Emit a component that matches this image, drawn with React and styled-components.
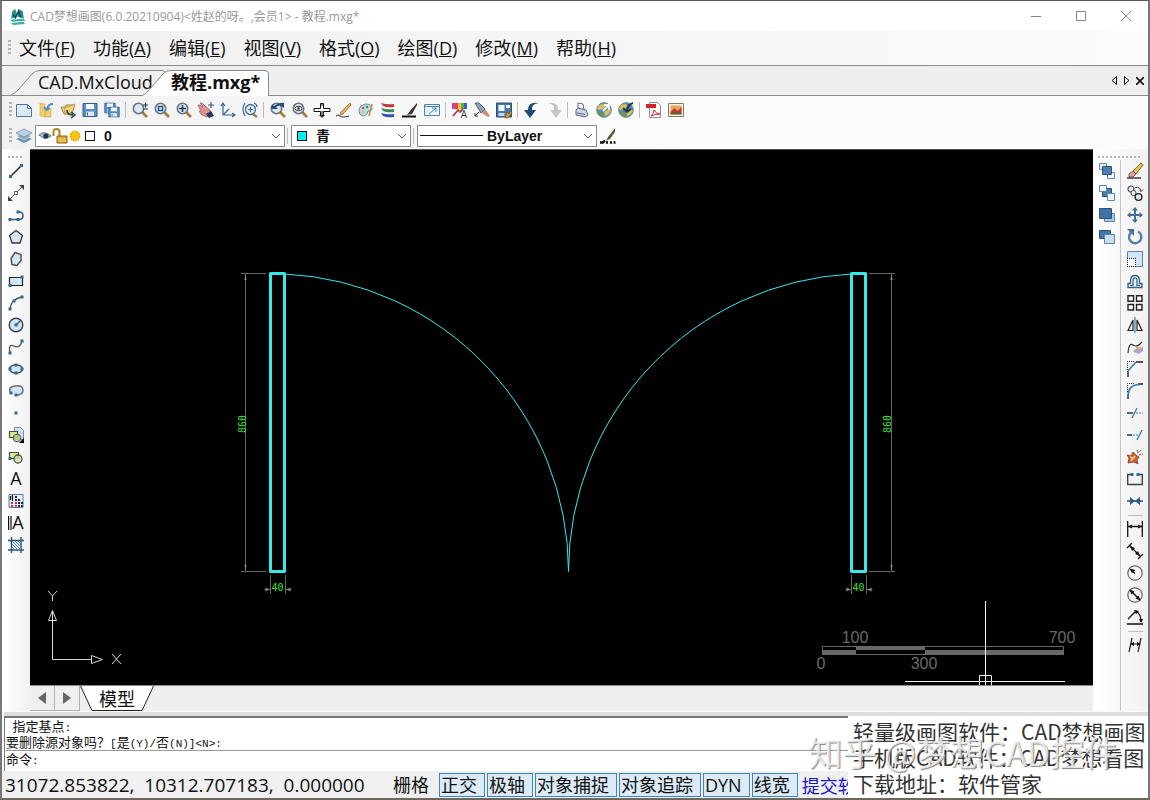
import React from 'react';
import styled, { createGlobalStyle } from 'styled-components';

const colores = {
  borde: '#8a8a8a',
  panel: '#efefef',
  marino: '#204877',
  claro: '#d3e6f5',
  cian: '#35e8ee',
  verde: '#3fe03f',
};

const ui = `'Open Sans', 'Noto Sans CJK SC', sans-serif`;

const GlobalStyle = createGlobalStyle`
  * { box-sizing: border-box; }
  body { margin: 0; font-family: ${ui}; color: #111; }
  button, input, select { font: inherit; color: inherit; }
  button { padding: 0; border: 0; background: none; }
  svg { display: block; flex: none; }
`;

const Window = styled.div`
  position: relative;
  min-height: 100vh;
  display: flex;
  flex-direction: column;
  border: 2px solid #77777a;
  border-top: 1px solid #55555a;
  border-bottom-color: #6d675d;
  background: #fafafa;
  overflow: hidden;
`;

const TitleBar = styled.header`
  height: 30px;
  display: flex;
  align-items: center;
  padding-left: 7px;
  background: #fff;
`;

const Title = styled.h1`
  flex: 1;
  margin: 0 0 0 4px;
  font-size: 12px;
  font-weight: 400;
  color: #999;
  white-space: nowrap;
`;

const WindowButton = styled.button`
  width: 45px;
  height: 30px;
  display: flex;
  align-items: center;
  justify-content: center;
`;

const MenuBar = styled.nav`
  height: 34px;
  display: flex;
  align-items: center;
  gap: 18px;
  padding-left: 6px;
  font-size: 18px;
  background: linear-gradient(90deg, #f0f0f0, #fbfbfb);
`;

const MenuItem = styled.button`
  white-space: nowrap;
  line-height: 24px;

  &:first-of-type { margin-left: -10px; }
`;

const Grip = styled.span`
  width: ${({ $flat }) => ($flat ? 'auto' : '3px')};
  height: ${({ $flat }) => ($flat ? '2px' : '16px')};
  flex: none;
  background: ${({ $flat }) =>
    `repeating-linear-gradient(${$flat ? '90deg' : '180deg'}, #b5b5b5 0 2px, transparent 2px 4px)`};
`;

const TabStrip = styled.div`
  height: 31px;
  display: flex;
  align-items: flex-end;
  padding-left: 8px;
  background: ${colores.panel};
  border-top: 1px solid ${colores.borde};
  border-bottom: 1px solid ${colores.borde};
`;

const Tab = styled.button`
  position: relative;
  width: ${({ $active }) => ($active ? '127px' : '156px')};
  height: 26px;
  margin: 0 0 -1px ${({ $active }) => ($active ? '-24px' : '0')};
  padding: 0 0 2px ${({ $active }) => ($active ? '29px' : '28px')};
  font-size: 18px;
  font-weight: ${({ $active }) => ($active ? 700 : 400)};
  line-height: 24px;
  text-align: left;
  white-space: nowrap;

  svg {
    position: absolute;
    inset: 0;
    width: 100%;
    height: 100%;
  }

  span { position: relative; }
`;

const TabControls = styled.div`
  display: flex;
  align-self: center;
  margin-left: auto;
  padding-right: 2px;
`;

const SmallButton = styled.button`
  width: 13px;
  height: 20px;
  display: flex;
  align-items: center;
  justify-content: center;
`;

const Toolbar = styled.div`
  height: ${({ $low }) => ($low ? '25px' : '28px')};
  display: flex;
  align-items: center;
  padding-left: 7px;
  padding-bottom: ${({ $low }) => ($low ? '1px' : '0')};
  background: linear-gradient(90deg, #f1f1f1, #fcfcfc 60%);

  ${Grip} { margin-right: 1px; }
`;

const ToolButton = styled.button`
  width: 22px;
  height: 22px;
  display: flex;
  flex: none;
  align-items: center;
  justify-content: center;

  &:hover { background: #dbe9f6; }
`;

const Separator = styled.span`
  flex: none;
  width: ${({ $flat }) => ($flat ? '15px' : '1px')};
  height: ${({ $flat }) => ($flat ? '1px' : '16px')};
  margin: ${({ $flat }) => ($flat ? '3px 4px 2px' : '0 3px 0 2px')};
  background: #bdbdbd;
`;

const Combo = styled.label`
  width: ${({ $width }) => $width};
  height: 22px;
  display: flex;
  align-items: center;
  padding: 0 3px 0 2px;
  border: 1px solid ${colores.borde};
  background: #fff;

  select {
    flex: 1;
    min-width: 0;
    height: 20px;
    padding: 0 0 0 ${({ $indent }) => $indent};
    border: 0;
    outline: 0;
    appearance: none;
    background: none;
    font: bold 14px 'Liberation Sans', 'Noto Sans CJK SC', sans-serif;
  }
`;

const Swatch = styled.span`
  width: 10px;
  height: 10px;
  flex: none;
  margin: 0 3px;
  border: 1px solid #111;
  background: ${({ $color }) => $color};
`;

const Workspace = styled.main`
  flex: 1;
  display: flex;
`;

const SideBar = styled.div`
  width: 28px;
  display: flex;
  flex-direction: column;
  padding: 7px 3px 0;
  background: linear-gradient(90deg, #fff, #f1f1f1);

  ${Grip} { margin: 0 4px 2px 3px; }
`;

const RightDock = styled.div`
  width: 55px;
  display: flex;
  flex-direction: column;
  padding-top: 7px;
  background: linear-gradient(90deg, #fff, #f1f1f1);

  > ${Grip} { margin: 0 7px 2px 5px; }
`;

const DockColumns = styled.div`
  flex: 1;
  display: flex;
`;

const DockColumn = styled.div`
  width: ${({ $last }) => ($last ? '28px' : '27px')};
  padding: 0 2px 0 3px;
  display: flex;
  flex-direction: column;
  border-left: ${({ $last }) => ($last ? '1px solid #c4c4c4' : '0')};
`;

const CenterPane = styled.div`
  flex: 1;
  min-width: 0;
  display: flex;
  flex-direction: column;
`;

const Canvas = styled.div`
  flex: 1;
  display: flex;
  min-height: 0;
  border-top: 1px solid #555;
  background: #000;

  > svg {
    flex: 1;
    width: 100%;
    min-width: 0;
  }
`;

const SheetBar = styled.div`
  height: 26px;
  display: flex;
  border-top: 1px solid ${colores.borde};
  background: ${colores.panel};
`;

const SheetArrow = styled.button`
  width: 25px;
  height: 25px;
  display: flex;
  align-items: center;
  justify-content: center;
  border: 1px solid #b0b0b0;
  border-width: 0 1px 1px 0;
`;

const SheetTab = styled.button`
  position: relative;
  width: 74px;
  height: 25px;
  font-size: 18px;
  line-height: 24px;

  svg {
    position: absolute;
    inset: 0;
  }

  span { position: relative; }
`;

const CommandPane = styled.section`
  margin: 5px 0 0 2px;
  padding-left: 1px;
  border: 1px solid #777;
  border-width: 2px 0 0 1px;
  background: #fff;
  font: 13px/16px 'Noto Sans CJK SC', sans-serif;
  box-shadow: 0 -4px 0 #dcdcdc;
`;

const CommandLog = styled.pre`
  height: 33px;
  margin: 0;
  font: inherit;
  border-bottom: 1px solid #999;
`;

const Latin = styled.span`
  font-family: 'Liberation Mono', monospace;
  font-size: 11px;
  line-height: 0;
`;

const CommandRow = styled.label`
  display: flex;
  height: 20px;

  input {
    flex: 1;
    padding: 0;
    border: 0;
    outline: 0;
    background: none;
  }
`;

const StatusBar = styled.footer`
  height: 27px;
  display: flex;
  align-items: center;
  gap: 2px;
  padding: 1px 0 0 3px;
  background: #f0f0f0;
  font-size: 18px;
  white-space: nowrap;
`;

const Coordinates = styled.output`
  width: 384px;
  font-size: 19px;
  white-space: pre;
`;

const Toggle = styled.button`
  height: 24px;
  padding: 0 7px 0 1px;
  border: 1px solid ${({ $on }) => ($on ? '#3a85bf' : 'transparent')};
  background: ${({ $on }) => ($on ? '#dcebf6' : 'none')};
  line-height: 20px;
`;

const SubmitLink = styled.a`
  padding-left: 2px;
  color: #1414c8;
  text-decoration: none;
`;

const Promo = styled.aside`
  position: absolute;
  right: -2px;
  bottom: -2px;
  width: 302px;
  height: 84px;
  padding: 2px 0 0 5px;
  background: #fff;
  color: #333;
  font: 21px/26px 'Noto Sans CJK SC', sans-serif;
  white-space: nowrap;

  p { margin: 0; }
`;

const Watermark = styled.div`
  position: absolute;
  right: 30px;
  bottom: 22px;
  color: rgba(255, 255, 255, 0.75);
  font: 34px/48px 'Noto Sans CJK SC', sans-serif;
  text-shadow: 1px 1px 1px #888;
  white-space: nowrap;
  pointer-events: none;
`;

const node = (x, y) => <rect x={x - 1.5} y={y - 1.5} width="3" height="3" fill="#2b6a9c" />;

const lens = (inner) => (
  <>
    <path d="M10 10l5 5" stroke="#b0763c" strokeWidth="2.6" />
    <circle cx="6.5" cy="6.5" r="5.2" fill="#dbe8f2" stroke="#6a7580" strokeWidth="1.6" />
    {inner}
  </>
);

const floppy = (
  <>
    <path d="M1 1.5h14v13H1z" fill="#5b8fc4" stroke="#315f90" />
    <path d="M4 2h8v5H4z" fill="#f3f8fc" />
    <path d="M4 9.5h8V14H4z" fill="#dbe8f2" />
    <path d="M5.5 10.5v3" stroke="#315f90" />
  </>
);

const globe = (
  <>
    <circle cx="8" cy="8" r="7.3" fill="#4c8fb4" stroke="#6b8a80" />
    <path d="M3 3l4-1 3 2-3 3-4 1-2-1zM8 10l5-3 2 2-3 4-3 1z" fill="#e0bd5c" />
    <path d="M2 10q3 4 6 4" stroke="#7c8f42" strokeWidth="2" fill="none" />
  </>
);

// Drawings on a 16 x 16 grid
const icons = {
  logo: (
    <>
      <path d="M2 10L3 3l3-2 2 7zM8 8l1-7 4 2 1 7z" fill="#258f94" />
      <path d="M4 6l2 3 3-6 2 6" stroke="#124d57" strokeWidth="1.5" fill="none" />
      <path d="M1 11l12-1 3 2-13 1zM2 14l12-1 1 2-11 1z" fill="#3cb0a6" />
    </>
  ),
  nuevo: <path d="M.5 2.5h11l4 4v8H.5zM11.5 2.5v4h4" fill="#d7ebf8" stroke="#50779c" />,
  abrir: (
    <>
      <path d="M2 1l5 1v13l-5-1zM7 7h6v8H7z" fill="#f0cf6a" stroke="#d1a84a" strokeWidth=".6" />
      <path d="M15 2q-5 0-6 5M6 5l2.5 3L12 6" fill="none" stroke="#4f8ec4" strokeWidth="1.8" />
    </>
  ),
  carpeta: (
    <>
      <path d="M1 5h4l1-2h8l-2 9H4z" fill="#f2dc95" stroke="#a88435" />
      <path d="M4 6l11-4-3 10H5z" fill="#ecd080" stroke="#a88435" strokeWidth=".7" />
      <path d="M7 8q0 5 6 5M11 10l4 3-4 3" fill="none" stroke="#283b4c" strokeWidth="1.5" />
    </>
  ),
  guardar: floppy,
  guardarTodo: (
    <>
      <g transform="scale(.75)">{floppy}</g>
      <g transform="translate(4 4) scale(.75)">{floppy}</g>
    </>
  ),
  zoomMas: (
    <>
      {lens()}
      <path d="M11 3h5M13.5 .5v5M11 7h5" stroke="#1c3b5e" strokeWidth="1.2" />
    </>
  ),
  zoomVentana: lens(<path d="M4.5 4.5h4v4h-4z" fill="none" stroke="#1d4f8c" strokeWidth="1.4" />),
  zoomTodo: lens(<path d="M3 6.5h7M6.5 3v7" stroke="#213b54" strokeWidth="1.6" />),
  mano: (
    <>
      <path d="M0 3l2 0 3 2-3-4 2 0 4 4 3 2 3 4-5 4-5-2-3-4 2 0z" fill="#d9938e" stroke="#a8605c" strokeWidth=".8" />
      <path d="M8 12l5-3 3 5-5 2z" fill="#223b65" />
      <path d="M10 3h6M13 0v6" stroke="#375f91" strokeWidth="1.2" />
    </>
  ),
  ejes: <path d="M3 1v12h12M3 13l6-6M1 4l2-3 2 3M12 11l3 2-3 2" fill="none" stroke="#386791" strokeWidth="1.2" />,
  zoomDinamico: (
    <>
      <path d="M11 12l4 3" stroke="#b0763c" strokeWidth="2.4" />
      <circle cx="8.5" cy="7.5" r="5" fill="#e6f2fb" stroke="#3f6d99" strokeWidth="1.3" />
      <path d="M6 7.5h5M8.5 5v5M3 1Q-1 7 3 14M12 1q3 1 3 4" fill="none" stroke="#3f6d99" strokeWidth="1.2" />
    </>
  ),
  zoomPrevio: lens(<path d="M1 7l1-5 2 2q5-4 10-3l0 5q-4-4-8-1l2 2z" fill="#284b7a" />),
  zoomOjo: lens(
    <>
      <ellipse cx="6.5" cy="6.5" rx="3.5" ry="2.2" fill="#fff" stroke="#333" />
      <circle cx="6.5" cy="6.5" r="1.2" fill="#222" />
    </>,
  ),
  cursor: (
    <>
      <path d="M0 6.5h6.5v-5h3v5H16v3H9.5v4h-3v-4H0z" fill="#fff" stroke="#111" />
      <path d="M8 1v3M8 9v6M5.5 13L8 15.500 10.500 13" fill="none" stroke="#111" />
    </>
  ),
  lapiz: (
    <>
      <path d="M14 1L5 10l-1 3 3-1 8-9z" fill="#e8ad55" stroke="#8b5a2b" strokeWidth=".7" />
      <path d="M0 14q2-2 4 0t9 0" fill="none" stroke="#3a2c28" />
    </>
  ),
  paleta: (
    <>
      <path d="M1 9q0-6 7-7 6 0 6 5-1 3-4 2-1 5-5 5-4-1-4-5z" fill="#b9dbe8" stroke="#6b8da1" />
      <circle cx="5" cy="6" r="1.3" fill="#d9493f" />
      <circle cx="9" cy="5" r="1.3" fill="#3f9d4b" />
      <circle cx="5" cy="10" r="1.3" fill="#e7b93d" />
      <path d="M14 2l-3 12" stroke="#c48c48" strokeWidth="1.6" />
    </>
  ),
  capasColor: (
    <>
      <path d="M1 1q6 2 13 1v3q-7 1-11-1z" fill="#c3343c" />
      <path d="M1 6q6 2 13 1v3q-7 1-11-1z" fill="#3c8c56" />
      <path d="M1 11q6 2 13 1v3q-7 1-11-1z" fill="#3153b4" />
    </>
  ),
  brocha: (
    <>
      <path d="M15 1L8 9l-3 4 5-1 5-9z" fill="#3b2f26" />
      <path d="M0 14.5h14" stroke="#111" strokeWidth="2" fill="none" />
    </>
  ),
  escalaVista: <path d="M.5 2.5h15v11H.5zM.5 4.5h15M5 12l7-6M8 6h4v4" fill="#eaf5fb" stroke="#4d86ac" />,
  colores: (
    <>
      <path d="M0 1h3v6H0z" fill="#d33bb4" />
      <path d="M3 1h3v6H3z" fill="#e8443c" />
      <path d="M6 1h3v6H6z" fill="#f0c53c" />
      <path d="M9 1h3v6H9z" fill="#4db05a" />
      <path d="M12 1h3v6h-3z" fill="#3c62d0" />
      <path d="M1 14l5-6 2 2 3-3" stroke="#a8483f" strokeWidth="1.8" fill="none" />
      <text x="12" y="16" textAnchor="middle" fontFamily="Open Sans, sans-serif" fontSize="10" fill="#333b58">A</text>
    </>
  ),
  borrador: (
    <>
      <path d="M1 1l4 0 6 6-4 4z" fill="#8aa3ba" stroke="#4d6277" />
      <path d="M8 11l3-4 5 7-2 1z" fill="#cf8a68" />
      <path d="M1 14l4-4M1 11v3h3" stroke="#333" fill="none" />
    </>
  ),
  guardarComo: (
    <>
      <path d="M.5 1h15v14H.5z" fill="#4a78a8" stroke="#2a4c70" />
      <path d="M2.5 3h6v6h-6zM10 3h4v3h-4z" fill="#f3f8fc" />
      <path d="M2.5 11h6v3h-6z" fill="#c7d7e4" />
      <path d="M9 16l2-6 2 2 2-3 1 2-4 5z" fill="#d49a3c" stroke="#6b481c" strokeWidth=".6" />
    </>
  ),
  deshacer: <path d="M15 1Q4-1 4 8H0l6 8 6-8H8Q7 2 15 1z" fill={colores.marino} />,
  rehacer: <path d="M1 1q11-2 11 7h4l-6 8-6-8h4q1-6-7-7z" fill="#c3c6c9" />,
  imprimir: (
    <>
      <path d="M4 1l5 1 1 6-6-1z" fill="#fff" stroke="#5b6787" />
      <path d="M2 8l2-2 8 2 2 5-3 2-9-2z" fill="#cdd5e6" stroke="#5b6787" />
      <path d="M3 11l8 1.5" stroke="#5b6787" />
    </>
  ),
  webSubir: (
    <>
      {globe}
      <path d="M7 9l5-5M8 3h5v5" stroke="#f4f6f8" strokeWidth="1.8" fill="none" />
    </>
  ),
  webBajar: (
    <>
      {globe}
      <path d="M15 1Q9 3 9 9M5 6l4 4 4-3" stroke="#263749" strokeWidth="2" fill="none" />
    </>
  ),
  pdf: (
    <>
      <path d="M3.5 .5h8l3 3v12h-11z" fill="#fff" stroke="#8c8c8c" />
      <path d="M0 2h10v4H0z" fill="#d3232b" />
      <path d="M5 14q3-3 3-6 2 4 6 4-5 0-9 2z" fill="none" stroke="#d3232b" />
    </>
  ),
  imagen: (
    <>
      <path d="M.5 1.5h15v13H.5z" fill="#f7f2e6" stroke="#8c7a60" />
      <path d="M2.5 3.5h11v9h-11z" fill="#e8a85a" />
      <path d="M2.5 10l4-4 3 3 4-4v7h-11z" fill="#bd3a2a" />
      <path d="M2.5 12l5-2 6 1v1.5h-11z" fill="#476b3c" />
    </>
  ),
  capas: (
    <>
      <path d="M0 11l8-3 8 3-8 4z" fill="#6b8bab" />
      <path d="M0 8l8-3 8 3-8 4z" fill="#8faac4" stroke="#fff" strokeWidth=".5" />
      <path d="M0 5l8-4 8 4-8 4z" fill="#bdd2e4" stroke="#55779a" strokeWidth=".6" />
    </>
  ),
  ojo: (
    <>
      <path d="M1 7q6-6 14 1-8 5-12 0z" fill="#aec2d6" stroke="#4a5d74" />
      <circle cx="9" cy="8" r="3" fill="#26384e" />
    </>
  ),
  candado: (
    <>
      <path d="M1.5 8V4q0-3 3-3t3 3v4" fill="none" stroke="#b28420" strokeWidth="2" />
      <path d="M5 8h10v7H5z" fill="#d9a72c" stroke="#8d6512" />
      <path d="M6 11h8M6 13h8" stroke="#f4d878" />
    </>
  ),
  sol: <circle cx="8" cy="8" r="5.5" fill="#f9c307" stroke="#e8a60c" strokeDasharray="2 1" strokeWidth="1.5" />,
  pluma: (
    <>
      <path d="M15 0L8 9l-2 4 4-2 5-7z" fill="#54613a" />
      <path d="M0 14.5h3l2-2M6 14.5h2M10 14.5h2M13.5 14.5h2" stroke="#111" strokeWidth="2.4" fill="none" />
    </>
  ),
  linea: <><path d="M2 14L14 2" stroke="#222" strokeWidth="1.4" />{node(2.5, 13.5)}{node(13.5, 2.5)}</>,
  lineaInf: (
    <>
      <path d="M1 15L15 1" stroke="#555" />
      <path d="M11 0h5v5zM0 11v5h5z" fill="#444" />
      <path d="M6.5 6.5h3v3h-3z" fill="#fff" stroke="#555" />
    </>
  ),
  polilinea: <><path d="M2 12.5h9q4 0 4-4t-5-3.5" fill="none" stroke="#3c5c78" strokeWidth="1.5" />{node(2, 12.5)}{node(10, 12.5)}{node(10, 5)}</>,
  poligono: <path d="M8 1.5l6.5 5-2.5 7.5H4L1.5 6.5z" fill={colores.claro} stroke="#333b43" strokeWidth="1.3" />,
  poligonoIrr: <path d="M7 1.5l6 2 0 6-4 5-5-1-1-6z" fill={colores.claro} stroke="#4a545d" strokeWidth="1.5" />,
  rectangulo: <><path d="M1.5 4.5h13v8h-13z" fill={colores.claro} stroke="#222" strokeWidth="1.2" />{node(2, 12.5)}{node(14, 4)}</>,
  arco: <><path d="M2 14Q3 4 14 2" fill="none" stroke="#4a545d" strokeWidth="1.3" />{node(2, 14)}{node(6, 6)}{node(14, 2)}</>,
  circulo: <><circle cx="8" cy="8" r="6.8" fill={colores.claro} stroke="#39434d" strokeWidth="1.4" /><path d="M8 8l4-4" stroke="#2b6a9c" strokeWidth="1.5" />{node(8, 8)}</>,
  spline: <><path d="M2 14Q0 4 6 7t8-5" fill="none" stroke="#4a545d" strokeWidth="1.3" />{node(2, 14)}{node(14, 2)}</>,
  elipse: <><ellipse cx="8" cy="8" rx="6.5" ry="4.2" fill={colores.claro} stroke="#39434d" strokeWidth="1.3" />{node(2, 8)}{node(14, 8)}{node(8, 4)}{node(8, 12)}</>,
  arcoElipse: <><path d="M3 10Q-1 4 7 3t8 4-7 5" fill={colores.claro} stroke="#66717c" strokeWidth="1.5" />{node(3, 10)}{node(8, 12)}</>,
  punto: node(8, 8),
  insertar: (
    <>
      <path d="M6.5 .5h6l3 3v9h-9z" fill={colores.claro} stroke="#6e8fac" />
      <path d="M1.5 4.5h8v6h-8z" fill="#d9e89a" stroke="#47563b" strokeWidth="1.2" />
      <circle cx="9" cy="11" r="3.8" fill="#bcd68f" fillOpacity=".8" stroke="#47563b" />
      <path d="M16 11v5h-5z" fill="#000" />
    </>
  ),
  bloque: (
    <>
      <path d="M1.5 3.5h9v6h-9z" fill="#d9e89a" stroke="#47563b" strokeWidth="1.2" />
      <circle cx="10" cy="10" r="4" fill="#cfe0ae" fillOpacity=".8" stroke="#47563b" strokeWidth="1.3" />
      {node(2, 9.5)}
    </>
  ),
  texto: <text x="8" y="14" textAnchor="middle" fontFamily="Open Sans, sans-serif" fontSize="18" fill="#111">A</text>,
  trama: (
    <>
      <path d="M1 1.5h14v13H1z" fill="#e7eff8" stroke="#5c7ca4" />
      <path d="M4.5 2v6M2.5 3v4" stroke="#111" strokeWidth="1.2" />
      <path d="M4 9v5M8 9v5" stroke="#c8343a" strokeWidth="2" strokeDasharray="2 1" />
      <path d="M8 3v5M11 6v8M14 9v5" stroke="#222b3c" strokeWidth="2" strokeDasharray="2 1" />
    </>
  ),
  textoMulti: (
    <>
      <path d="M.6 1v14M3 1v14" stroke="#111" strokeWidth="1.2" />
      <text x="10" y="14" textAnchor="middle" fontFamily="Open Sans, sans-serif" fontSize="18" fill="#111">A</text>
    </>
  ),
  sombreado: (
    <>
      <path d="M3.5 0v16M13 0v16M0 3.5h16M0 13h16" stroke="#2c5274" strokeWidth="1.4" />
      <path d="M4 4l9 9M7 4l6 6M10 4l3 3M4 7l6 6M4 10l3 3" stroke="#4f83ad" />
    </>
  ),
  borrar: (
    <>
      <path d="M6 8l8-8 2 2-7 9z" fill="#e7c455" stroke="#5d4a1e" strokeWidth=".8" />
      <path d="M2 11l4-3 3 3-3 3H2z" fill="#e0a09c" stroke="#7c3b3b" strokeWidth=".8" />
      <path d="M0 15h14" stroke="#222" strokeWidth="1.3" />
    </>
  ),
  copiar: (
    <>
      <circle cx="4" cy="4" r="3" fill="#eef2f5" stroke="#3f4851" strokeWidth="1.2" />
      <circle cx="6.5" cy="8" r="2.6" fill="#eef2f5" stroke="#3f4851" />
      <circle cx="11.5" cy="12" r="3.4" fill="#dbe8f2" stroke="#222" strokeWidth="1.4" />
      <path d="M8 2.5q6-1 6 4M12 4.5l2 2 2-2" fill="none" stroke="#3f4851" />
    </>
  ),
  mover: <path d="M8 0l3 3.5H9V7h3.5V5L16 8l-3.5 3V9H9v3.5h2L8 16l-3-3.5h2V9H3.5v2L0 8l3.5-3v2H7V3.5H5z" fill="#41719c" />,
  girar: (
    <>
      <path d="M11 2.5A6.2 6.2 0 1 1 4 3.5" fill="none" stroke="#557fa6" strokeWidth="2.4" />
      <path d="M0 0h7v7z" fill="#41719c" />
    </>
  ),
  escalar: (
    <>
      <path d="M.5 .5h15v15H.5z" fill={colores.claro} stroke="#5d88ae" />
      <path d="M0 7h9v9H0z" fill="#fff" />
      <path d="M0 7.5h9M8.5 7v9M.5 7v9M0 15.5h9" stroke="#111" strokeDasharray="1 1" />
    </>
  ),
  desfase: (
    <>
      <path d="M1 14.5h14v-4h-2.5V7Q12 2.500 8 2.500T3.500 7v3.500H1z" fill="#e6f1f8" stroke="#315f7f" strokeWidth="1.3" />
      <path d="M3 12.5h3v-5q0-2.500 2-2.500t2 2.500v5h3" fill="none" stroke="#315f7f" strokeWidth="1.2" />
    </>
  ),
  matriz: <path d="M1 .7h5.5v5.5H1zM9.500 .7H15v5.500H9.500zM1 9.500h5.500V15H1zM9.500 9.500H15V15H9.500z" fill="#fff" stroke="#222" strokeWidth="1.4" />,
  simetria: (
    <>
      <path d="M6 3v10.5H1zM10 3v10.500h5z" fill="#f4f4f4" stroke="#222" strokeWidth="1.2" />
      <path d="M8 0v16" stroke="#3c7fb1" strokeWidth="1.2" />
    </>
  ),
  editarSpline: (
    <>
      <path d="M1 14q1-11 5-8t9-3" fill="none" stroke="#333" strokeWidth="1.2" />
      <path d="M6 13l4-5 3 2 3-3v5l-4 3z" fill="#a9a4d8" />
      <path d="M9 9l5 0" stroke="#e7b93d" strokeWidth="2" />
    </>
  ),
  chaflan: (
    <>
      <path d="M1 16v-6M9 1h7" fill="none" stroke="#222" strokeWidth="1.4" />
      <path d="M1 10l8-9" stroke="#3c7fb1" strokeWidth="1.5" />
      <path d="M.5 9V.5H8" fill="none" stroke="#222" strokeDasharray="1 1" />
    </>
  ),
  empalme: (
    <>
      <path d="M1 16v-4M11 1h5" stroke="#222" strokeWidth="1.4" />
      <path d="M1 13Q1 2 12 1.5" fill="none" stroke="#3c7fb1" strokeWidth="1.7" />
      <path d="M.5 9V.5H8" fill="none" stroke="#222" strokeDasharray="1 1" />
    </>
  ),
  recortar: <><path d="M0 8h6" stroke="#222" strokeWidth="1.4" /><path d="M5 13l5-10" stroke="#3c7fb1" strokeWidth="1.4" /><path d="M9 8h7" stroke="#3c7fb1" strokeWidth="1.2" strokeDasharray="2 1" /></>,
  alargar: <><path d="M0 8h5" stroke="#222" strokeWidth="1.4" /><path d="M10 13l5-10" stroke="#3c7fb1" strokeWidth="1.4" /><path d="M6 8h6" stroke="#3c7fb1" strokeWidth="1.2" strokeDasharray="2 1" /></>,
  explotar: (
    <>
      <path d="M1 14l1-5-2-3 4 1 2-4 3 3 3 2-2 3 1 4-4-2z" fill="#c9622c" stroke="#7c3b2c" strokeWidth=".8" />
      <path d="M4 12l4-5M3 8l3 1" stroke="#f4c98e" strokeWidth="1.8" />
      <path d="M10 4l5-3M12 6l4-1M10 1l1 2" stroke="#555" strokeDasharray="2 1" />
    </>
  ),
  partir: <><path d="M4 3.5H.7v10h14.6v-10H12" fill="none" stroke="#39434d" strokeWidth="1.4" />{node(5, 3.5)}{node(11, 3.5)}</>,
  unir: (
    <>
      <path d="M0 8h16" stroke="#2b5d86" strokeWidth="1.6" />
      <path d="M3 4L8 8l-5 4zM13 4L8 8l5 4z" fill="#2b5d86" />
    </>
  ),
  cotaLineal: <><path d="M.7 0v16M15.3 0v16M1 5.5h14" stroke="#111" strokeWidth="1.3" /><path d="M1 5.5l4-2v4zM15 5.500l-4-2v4z" fill="#111" /></>,
  cotaAlineada: (
    <>
      <path d="M0 5l5-5M11 16l5-5M3 3l10 10" stroke="#111" strokeWidth="1.4" />
      <path d="M3 3l5 2-3 3zM13 13L8 11l3-3z" fill="#111" />
    </>
  ),
  cotaRadio: <><circle cx="8" cy="8" r="7.2" fill="none" stroke="#666" strokeWidth="1.2" /><path d="M4 5l4 3.5" stroke="#111" strokeWidth="1.4" /><path d="M2.5 3.5l6 1.5-3.5 3z" fill="#111" /></>,
  cotaDiametro: <><circle cx="8" cy="8" r="7.2" fill="none" stroke="#666" strokeWidth="1.2" /><path d="M3 3l10 10" stroke="#111" strokeWidth="1.4" /><path d="M2.5 2.5l5 2-3 3zM13.5 13.5l-5-2 3-3z" fill="#111" /></>,
  cotaAngular: (
    <>
      <path d="M0 15h16M1 10l8-8M9 2q5 3 5 11" fill="none" stroke="#111" strokeWidth="1.3" />
      <path d="M7 1l5 1-3 3zM14 14l-2-4h4z" fill="#111" />
    </>
  ),
  cotaOblicua: <><path d="M2 15L5 1M11 15l3-14M4 7h9" stroke="#222" strokeWidth="1.2" /><path d="M3 7l4-2v4zM14 7l-4-2v4z" fill="#111" /></>,
  alFrente: (
    <>
      <path d="M.5 .5h7v6h-7zM8.500 9.500h7v6h-7z" fill="#eef4f9" stroke="#5d88ae" />
      <path d="M3.5 3.5h9v8h-9z" fill="#4d7fae" stroke="#2b5580" />
    </>
  ),
  alFondo: (
    <>
      <path d="M3.5 3.5h9v8h-9z" fill="#4d7fae" stroke="#2b5580" />
      <path d="M.5 .5h7v6h-7zM8.500 8.500h7v7h-7z" fill="#eef4f9" stroke="#5d88ae" />
    </>
  ),
  encima: (
    <>
      <path d="M5.5 6.5h10v8h-10z" fill="#a9c9e4" stroke="#5d88ae" />
      <path d="M.5 1.5h12v10H.5z" fill="#3e74a8" stroke="#2b5580" />
    </>
  ),
  debajo: (
    <>
      <path d="M.5 1.5h11v8H.5z" fill="#3e74a8" stroke="#2b5580" />
      <path d="M5.5 5.5h10v9h-10z" fill="#cbdceb" stroke="#5d88ae" />
    </>
  ),
};

function Icon({ name, size = 16 }) {
  return (
    <svg width={size} height={size} viewBox="0 0 16 16" overflow="visible" aria-hidden="true">
      {icons[name]}
    </svg>
  );
}

function Tools({ names, flat }) {
  return names.map((name, i) =>
    name === '|' ? (
      <Separator key={i} $flat={flat} />
    ) : (
      <ToolButton key={name} aria-label={name}>
        <Icon name={name} />
      </ToolButton>
    ),
  );
}

const Chevron = () => (
  <svg width="10" height="6" viewBox="0 0 10 6">
    <path d="M1 1l4 4 4-4" fill="none" stroke="#555" />
  </svg>
);

const menus = [
  ['文件', 'F'], ['功能', 'A'], ['编辑', 'E'], ['视图', 'V'],
  ['格式', 'O'], ['绘图', 'D'], ['修改', 'M'], ['帮助', 'H'],
];

const archivo = [
  'nuevo', 'abrir', 'carpeta', 'guardar', 'guardarTodo', '|',
  'zoomMas', 'zoomVentana', 'zoomTodo', 'mano', 'ejes', 'zoomDinamico', '|',
  'zoomPrevio', 'zoomOjo', 'cursor', 'lapiz', 'paleta', 'capasColor', 'brocha', 'escalaVista', '|',
  'colores', 'borrador', 'guardarComo', '|',
  'deshacer', 'rehacer', '|',
  'imprimir', 'webSubir', 'webBajar', '|',
  'pdf', 'imagen',
];

const dibujo = [
  'linea', 'lineaInf', 'polilinea', 'poligono', 'poligonoIrr', 'rectangulo', 'arco', 'circulo', 'spline',
  'elipse', 'arcoElipse', 'punto', 'insertar', 'bloque', 'texto', 'trama', 'textoMulti', 'sombreado',
];

const orden = ['alFrente', 'alFondo', 'encima', 'debajo'];

const modificar = [
  'borrar', 'copiar', 'mover', 'girar', 'escalar', 'desfase', 'matriz', 'simetria', 'editarSpline',
  'chaflan', 'empalme', 'recortar', 'alargar', 'explotar', 'partir', 'unir', '|',
  'cotaLineal', 'cotaAlineada', 'cotaRadio', 'cotaDiametro', 'cotaAngular', '|', 'cotaOblicua',
];

const cota = { fontFamily: 'DejaVu Sans Mono, monospace', fontSize: 10, fill: colores.verde };

function VerticalDimension({ x, from, to, textX }) {
  return (
    <g>
      <path d={`M${x} 273.5V571.5M${from} 273.5H${to}M${from} 571.5H${to}`} stroke="#666" />
      <path d={`M${x} 274l-1 6h2zM${x} 571l-1-6h2z`} fill="#999" />
      <text transform={`translate(${textX} 433) rotate(-90)`} {...cota}>860</text>
    </g>
  );
}

function WidthDimension({ x }) {
  return (
    <g>
      <path d={`M${x - 13} 589.5h6M${x + 8} 589.5h6M${x - 7} 575v19M${x + 8} 575v19`} stroke="#666" />
      <path d={`M${x - 8} 589.5l-4-2v4zM${x + 9} 589.5l4-2v4z`} fill="#888" />
      <text x={x} y="591" textAnchor="middle" {...cota}>40</text>
    </g>
  );
}

function Drawing() {
  return (
    <svg viewBox="30 150 1063 535" preserveAspectRatio="xMidYMid slice" fontFamily="Liberation Sans, sans-serif">
      <path d="M285 274A298 298 0 0 1 568.5 571.5A298 298 0 0 1 851 274" fill="none" stroke={colores.cian} />
      <g fill="none" stroke={colores.cian} strokeWidth="3" strokeLinejoin="round">
        <path d="M270.5 273.5h14v298h-14z" />
        <path d="M851.5 273.5h14v298h-14z" />
      </g>
      <VerticalDimension x={245.5} from={241} to={266} textX={246} />
      <VerticalDimension x={891.5} from={869} to={895} textX={891} />
      <WidthDimension x={277.5} />
      <WidthDimension x={858.5} />
      <g fill="none" stroke="#d8d8d8">
        <path d="M52.5 611v48.5h39M48.5 620.5h8l-4-10zM91.5 655.5v8l11-4z" />
        <path d="M48 591l4.5 5 4.5-5M52.5 596v5M112 654l9 10M121 654l-9 10" />
      </g>
      <g fill="#686868">
        <path d="M822.5 646.5h241v8h-241z" fill="none" stroke="#686868" />
        <path d="M822 650h34v5h-34zM856 646h69v4h-69zM925 650h139v5H925z" />
        <g fontSize="16" textAnchor="middle">
          <text x="855" y="643">100</text>
          <text x="1062" y="643">700</text>
          <text x="821" y="669">0</text>
          <text x="924" y="669">300</text>
        </g>
      </g>
      <path d="M985.5 601v84M905 681.5h160M979.5 685v-9.5h12V685" fill="none" stroke="#f4f4f4" />
    </svg>
  );
}

const toggles = [
  ['栅格', false], ['正交', true], ['极轴', true], ['对象捕捉', true],
  ['对象追踪', true], ['DYN', true], ['线宽', true],
];

function App() {
  return (
    <Window>
      <GlobalStyle />
      <TitleBar>
        <Icon name="logo" size={17} />
        <Title>CAD梦想画图(6.0.20210904)&lt;姓赵的呀。,会员1&gt; - 教程.mxg*</Title>
        <WindowButton aria-label="Minimizar">
          <svg width="10" height="10"><path d="M0 5.5h10" stroke="#888" /></svg>
        </WindowButton>
        <WindowButton aria-label="Maximizar">
          <svg width="10" height="10"><path d="M.5 .5h9v9h-9z" fill="none" stroke="#888" /></svg>
        </WindowButton>
        <WindowButton aria-label="Cerrar">
          <svg width="10" height="10"><path d="M0 0l10 10M10 0L0 10" stroke="#888" /></svg>
        </WindowButton>
      </TitleBar>

      <MenuBar>
        <Grip />
        {menus.map(([label, key]) => (
          <MenuItem key={key}>
            {label}(<u>{key}</u>)
          </MenuItem>
        ))}
      </MenuBar>

      <TabStrip>
        <Tab>
          <svg viewBox="0 0 156 26" preserveAspectRatio="none">
            <path d="M0 25.5Q4 24 8 20L22 4Q25 .5 30 .5H153L156 3" fill="#f1f1f1" stroke="#8a8a8a" />
          </svg>
          <span>CAD.MxCloud</span>
        </Tab>
        <Tab $active>
          <svg viewBox="0 0 127 26" preserveAspectRatio="none">
            <path d="M0 26Q4 24 7 20L21 4Q24 .5 29 .5H123Q126.5 .5 126.5 4V26" fill="#fff" stroke="#8a8a8a" />
          </svg>
          <span>教程.mxg*</span>
        </Tab>
        <TabControls>
          <SmallButton aria-label="Anterior">
            <svg width="6" height="9"><path d="M5.5 .5v8L1 4.5z" fill="none" stroke="#111" /></svg>
          </SmallButton>
          <SmallButton aria-label="Siguiente">
            <svg width="6" height="9"><path d="M.5 .5v8L5 4.5z" fill="none" stroke="#111" /></svg>
          </SmallButton>
          <SmallButton aria-label="Cerrar">
            <svg width="8" height="8"><path d="M0 0l8 8M8 0L0 8" stroke="#111" strokeWidth="1.6" /></svg>
          </SmallButton>
        </TabControls>
      </TabStrip>

      <Toolbar>
        <Grip />
        <Tools names={archivo} />
      </Toolbar>
      <Toolbar $low>
        <Grip />
        <ToolButton aria-label="capas"><Icon name="capas" /></ToolButton>
        <Combo $width="250px" $indent="6px">
          <Icon name="ojo" size={14} />
          <Icon name="candado" />
          <Icon name="sol" size={14} />
          <Swatch $color="#fff" />
          <select aria-label="Capa"><option>0</option></select>
          <Chevron />
        </Combo>
        <Separator />
        <Combo $width="120px" $indent="6px">
          <Swatch $color="#00f0f0" />
          <select aria-label="Color"><option>青</option></select>
          <Chevron />
        </Combo>
        <Separator />
        <Combo $width="180px" $indent="4px">
          <svg width="63" height="2"><path d="M0 .5h63" stroke="#111" /></svg>
          <select aria-label="Tipo de linea"><option>ByLayer</option></select>
          <Chevron />
        </Combo>
        <ToolButton aria-label="pluma"><Icon name="pluma" /></ToolButton>
      </Toolbar>

      <Workspace>
        <SideBar>
          <Grip $flat />
          <Tools names={dibujo} />
        </SideBar>
        <CenterPane>
          <Canvas><Drawing /></Canvas>
          <SheetBar>
            <SheetArrow aria-label="Anterior">
              <svg width="8" height="12"><path d="M8 0v12L0 6z" fill="#666" /></svg>
            </SheetArrow>
            <SheetArrow aria-label="Siguiente">
              <svg width="8" height="12"><path d="M0 0v12l8-6z" fill="#666" /></svg>
            </SheetArrow>
            <SheetTab>
              <svg width="74" height="25" viewBox="0 0 74 25">
                <path d="M.5 0L12 24.5h50L73.5 0" fill="#fff" stroke="#222" />
              </svg>
              <span>模型</span>
            </SheetTab>
          </SheetBar>
        </CenterPane>
        <RightDock>
          <Grip $flat />
          <DockColumns>
            <DockColumn><Tools names={orden} /></DockColumn>
            <DockColumn $last><Tools names={modificar} flat /></DockColumn>
          </DockColumns>
        </RightDock>
      </Workspace>

      <CommandPane>
        <CommandLog>
          <Latin> </Latin>指定基点<Latin>:</Latin>{'\n'}
          要删除源对象吗？<Latin>[</Latin>是<Latin>(Y)/</Latin>否<Latin>(N)]&lt;N&gt;:</Latin>
        </CommandLog>
        <CommandRow>
          <span>命令<Latin>:</Latin></span>
          <input type="text" />
        </CommandRow>
      </CommandPane>

      <StatusBar>
        <Coordinates>{'31072.853822,  10312.707183,  0.000000'}</Coordinates>
        {toggles.map(([label, on]) => (
          <Toggle key={label} $on={on} aria-pressed={on}>{label}</Toggle>
        ))}
        <SubmitLink href="#">提交软件问题</SubmitLink>
      </StatusBar>

      <Promo>
        <p>轻量级画图软件：CAD梦想画图</p>
        <p>手机版CAD软件：CAD梦想看图</p>
        <p>下载地址：软件管家</p>
      </Promo>
      <Watermark>知乎 @梦想CAD控件</Watermark>
    </Window>
  );
}

export default App;
